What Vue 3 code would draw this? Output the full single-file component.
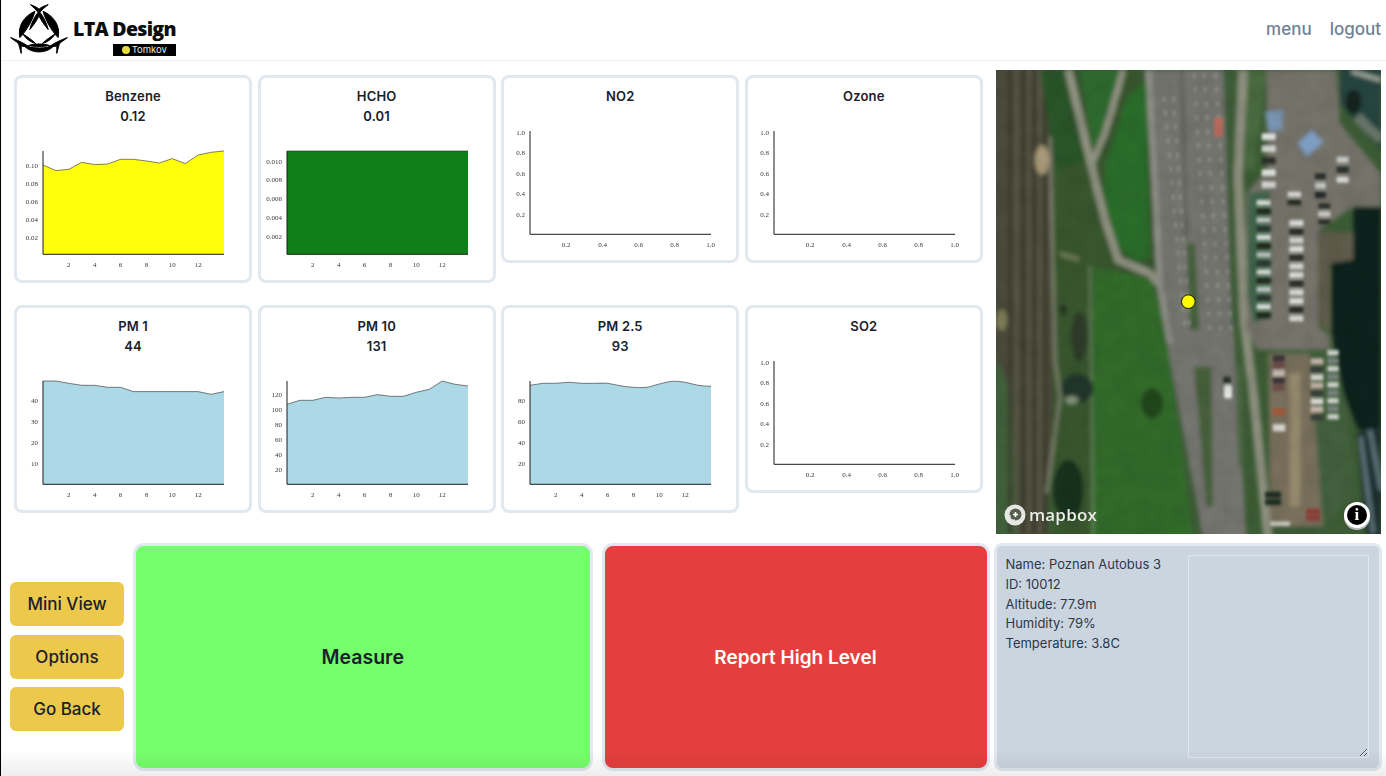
<template>
  <div class="page">
    <header class="topbar">
      <div class="brand">
        <svg class="brand-mark" viewBox="28 0 176 156">
          <path d="M90 4C100 8 110 12 116 18C122 12 132 8 144 4C134 12 126 18 120 26H112C106 18 98 12 90 4Z" />
          <path d="M104 24C72 38 50 68 58 104C66 96 72 88 80 76C90 60 98 44 104 24Z" />
          <path d="M128 24C160 38 182 68 174 104C166 96 160 88 152 76C142 60 134 44 128 24Z" />
          <path d="M116 24C104 38 92 60 88 80C98 68 110 52 116 38C122 52 134 68 144 80C140 60 128 38 116 24Z" />
          <path d="M70 128C92 154 140 154 162 128C140 138 94 138 70 128Z" />
          <path d="M84 128C100 122 132 122 148 128C132 132 100 132 84 128Z" />
          <path d="M30 104C50 112 66 118 92 136C78 132 68 130 62 130L62 152C58 138 56 126 52 120C44 114 36 110 30 104Z" />
          <path d="M202 104C182 112 166 118 140 136C154 132 164 130 170 130L170 152C174 138 176 126 180 120C188 114 196 110 202 104Z" />
          <path d="M66 92C76 108 90 118 106 122C94 110 80 102 66 92Z" />
          <path d="M166 92C156 108 142 118 126 122C138 110 152 102 166 92Z" />
        </svg>
        <div class="brand-text">
          <div class="brand-name">LTA Design</div>
          <div class="brand-tag"><span class="brand-dot"></span>Tomkov</div>
        </div>
      </div>
      <nav class="topnav">
        <a>menu</a>
        <a>logout</a>
      </nav>
    </header>

    <section class="upper">
      <div class="sensor-grid">
        <div v-for="c in charts" :key="c.name" class="sensor-card">
          <div class="sensor-name">{{ c.name }}</div>
          <div v-if="c.value" class="sensor-name">{{ c.value }}</div>
          <svg class="sensor-chart" width="232" height="154" viewBox="0 0 232 154">
            <path v-if="c.heights" :d="areaPath(c)" :fill="c.fill" />
            <path v-if="c.heights" :d="linePath(c)" fill="none" class="chart-line" />
            <path :d="`M${LEFT} ${TOP}V${BOTTOM}H${RIGHT}`" fill="none" class="chart-axis" />
            <text
              v-for="t in c.yTicks"
              :key="t[0]"
              :x="21"
              :y="BOTTOM - t[1] + 2.4"
              text-anchor="end"
              class="chart-tick"
            >{{ t[0] }}</text>
            <text
              v-for="t in c.xTicks || timeTicks"
              :key="t[0]"
              :x="LEFT + t[1]"
              :y="BOTTOM + 12.5"
              text-anchor="middle"
              class="chart-tick"
            >{{ t[0] }}</text>
          </svg>
        </div>
      </div>

      <div class="map">
        <svg class="map-photo" viewBox="18 30 1155 1392" preserveAspectRatio="none">
          <defs>
            <filter id="soft" x="-5%" y="-5%" width="110%" height="110%"><feGaussianBlur stdDeviation="7" /></filter>
            <filter id="softer" x="-5%" y="-5%" width="110%" height="110%"><feGaussianBlur stdDeviation="4" /></filter>
            <filter id="grain" x="0" y="0" width="100%" height="100%">
              <feTurbulence type="fractalNoise" baseFrequency="0.018" numOctaves="2" seed="4" />
              <feColorMatrix values="0 0 0 0 0  0 0 0 0 0  0 0 0 0 0  1.6 0 0 0 -0.55" />
            </filter>
          </defs>
          <rect x="18" y="30" width="1155" height="1392" fill="#3c5c35" />
          <g filter="url(#soft)">
            <path d="M0 0H188L196 900L170 1440H0Z" fill="#4c4b3a" />
            <path d="M0 880Q60 930 72 1120L80 1440H0Z" fill="#40603a" />
            <path d="M60 20V1420M100 20V1420M132 20V1420M165 20V1420" stroke="#38382b" stroke-width="9" />
            <path d="M80 20V1420M118 20V1420M150 20V1420" stroke="#605f4c" stroke-width="6" />
            <path d="M190 30H480L500 660L600 1440H190Z" fill="#37572f" />
            <path d="M310 620L490 660L530 830L610 1440H300Z" fill="#316a2c" />
            <path d="M150 30H235L290 300L200 330L180 230Z" fill="#2c5429" />
            <path d="M270 30H390L315 290Z" fill="#2d6b2f" />
            <path d="M412 110L470 60L480 590L430 606L380 550L340 400L350 300Z" fill="#2c6c2c" />
            <path d="M235 30L300 300L345 480L385 600L480 640L525 690" fill="none" stroke="#8f9180" stroke-width="24" />
            <path d="M400 30L345 220L305 310" fill="none" stroke="#8f9180" stroke-width="20" />
            <path d="M180 230L195 900L210 1010L170 1300" fill="none" stroke="#7c7f6c" stroke-width="10" />
            <path d="M300 620L310 1440" fill="none" stroke="#66805a" stroke-width="7" />
            <path d="M470 30H705L730 800L770 1440H640L540 900L500 660Z" fill="#747570" />
            <path d="M475 30L510 680L540 850" fill="none" stroke="#8f9088" stroke-width="18" />
            <path d="M700 30H745L742 600L750 800H725Z" fill="#3e5d38" />
            <path d="M772 30H832L790 330L770 330Z" fill="#486a3f" />
            <path d="M760 30L745 350L765 800L790 1000L835 1440" fill="none" stroke="#8d8f7e" stroke-width="28" />
            <path d="M590 550H615L628 810H600Z" fill="#45603a" />
            <path d="M612 920H665L668 1340H650Z" fill="#46603a" />
            <path d="M735 920H755L760 1220H745Z" fill="#4e6844" />
            <path d="M575 30L590 540" stroke="#5e5e5a" stroke-width="10" fill="none" />
            <path d="M830 30H1040L1050 190L1173 340V440H1090L985 510V800L1020 830V870H800L770 800V400L830 330Z" fill="#74736a" />
            <path d="M776 400L840 390L842 770L790 790L772 700Z" fill="#40654a" />
            <path d="M985 510L1090 520V600L1020 610V820L985 790Z" fill="#5e5c4c" />
            <path d="M835 880H960L1000 1400H840Z" fill="#786f5c" />
            <path d="M960 880H1060L1092 1300L1000 1410Z" fill="#42613e" />
            <path d="M915 940V1340" stroke="#95896e" stroke-width="32" />
            <path d="M1090 440H1173V1110H1105L1060 1000L1025 820V610L1090 600Z" fill="#10231f" />
            <path d="M1100 1120L1173 1100V1440H1130Z" fill="#1f2f2e" />
            <path d="M1112 1130L1150 1420M1140 1110L1173 1290" stroke="#5f747c" stroke-width="14" />
            <path d="M1050 20H1173V270L1100 190L1050 130Z" fill="#27443f" />
            <path d="M1100 170L1173 240" stroke="#67766b" stroke-width="30" />
            <path d="M1085 35L1173 60" stroke="#a4aca2" stroke-width="12" />
            <ellipse cx="1090" cy="125" rx="24" ry="36" fill="#14201b" />
            <path d="M825 155L880 150L875 210L835 215Z" fill="#7b96b5" />
            <path d="M925 250L965 210L1000 245L950 290Z" fill="#7d9dc2" />
            <ellipse cx="268" cy="830" rx="24" ry="76" fill="#2e3a2c" />
            <ellipse cx="220" cy="750" rx="10" ry="18" fill="#26331f" />
            <ellipse cx="262" cy="985" rx="48" ry="44" fill="#24362a" />
            <ellipse cx="245" cy="1020" rx="20" ry="12" fill="#80907a" />
            <ellipse cx="486" cy="1030" rx="32" ry="46" fill="#23461f" />
            <ellipse cx="235" cy="1290" rx="46" ry="90" fill="#19301c" />
            <ellipse cx="156" cy="300" rx="22" ry="44" fill="#a89a78" />
            <ellipse cx="35" cy="780" rx="17" ry="32" fill="#7d7c58" />
            <path d="M210 582L268 598" stroke="#6f7a55" stroke-width="14" />
          </g>
          <g filter="url(#softer)">
            <rect v-for="(d, i) in laneDashes" :key="'d' + i" :x="d[0]" :y="d[1]" width="5" height="14" fill="#cfd2cc" opacity="0.5" />
            <rect v-for="(car, i) in cars" :key="'c' + i" :x="car[0]" :y="car[1]" :width="car[2]" :height="car[3]" :fill="car[4]" />
            <rect x="672" y="172" width="28" height="58" rx="8" fill="#b8695c" />
            <rect x="702" y="975" width="24" height="40" rx="6" fill="#e3e6e4" />
            <rect x="700" y="950" width="22" height="20" fill="#26302a" />
          </g>
          <rect x="18" y="30" width="1155" height="1392" filter="url(#grain)" opacity="0.08" />
          <circle cx="595" cy="725" r="20.5" fill="#ffff00" stroke="#111" stroke-width="3" />
        </svg>
        <div class="map-logo">
          <svg width="22" height="22" viewBox="0 0 22 22">
            <circle cx="11" cy="11" r="10.5" fill="#e6e6e4" />
            <circle cx="11.5" cy="10.5" r="6" fill="#56604c" />
            <path d="M5.5 11V16.5H11" fill="none" stroke="#e6e6e4" stroke-width="2" />
            <path d="M11.5 8v5M9 10.5h5" stroke="#fff" stroke-width="1.6" />
          </svg>
          <span>mapbox</span>
        </div>
        <div class="map-info">i</div>
      </div>
    </section>

    <section class="lower">
      <div class="side-actions">
        <button class="side-btn">Mini View</button>
        <button class="side-btn">Options</button>
        <button class="side-btn">Go Back</button>
      </div>
      <button class="big-btn big-btn-measure">Measure</button>
      <button class="big-btn big-btn-report">Report High Level</button>
      <div class="device-panel">
        <div class="device-info">
          <div v-for="line in deviceInfo" :key="line">{{ line }}</div>
        </div>
        <textarea class="device-notes"></textarea>
      </div>
    </section>

    <div class="bottom-fade"></div>
  </div>
</template>

<script setup>
const LEFT = 26
const RIGHT = 207
const TOP = 25
const BOTTOM = 128.3

// x axis 0..14 on the filled charts, 12.93px per step
const STEP = (RIGHT - LEFT) / 14
const timeTicks = [2, 4, 6, 8, 10, 12].map((n) => [n, n * STEP])
const unitTicks = [['0.2', 36], ['0.4', 72.5], ['0.6', 108.5], ['0.8', 144.5], ['1.0', 180.5]]
const unitY = [['1.0', 102], ['0.8', 81.5], ['0.6', 61], ['0.4', 40.5], ['0.2', 20]]

const BLUE = '#add8e6'

// heights are pixels above the x axis
const charts = [
  {
    name: 'Benzene', value: '0.12', fill: '#ffff0c',
    heights: [89.3, 83.7, 85, 92, 89.7, 90.3, 95, 95, 93.3, 91.3, 95.7, 90.7, 99.3, 102, 103.3],
    yTicks: [['0.10', 88.3], ['0.08', 70.3], ['0.06', 52.3], ['0.04', 34.7], ['0.02', 16.7]]
  },
  {
    name: 'HCHO', value: '0.01', fill: '#107f17',
    heights: Array(15).fill(103.3),
    yTicks: [['0.010', 92.7], ['0.008', 74.3], ['0.006', 55.3], ['0.004', 36.7], ['0.002', 18]]
  },
  { name: 'NO2', xTicks: unitTicks, yTicks: unitY },
  { name: 'Ozone', xTicks: unitTicks, yTicks: unitY },
  {
    name: 'PM 1', value: '44', fill: BLUE,
    heights: [103.3, 103.3, 101, 99, 99, 97, 97, 92.7, 92.7, 92.7, 92.7, 92.7, 92.7, 90, 92.7],
    yTicks: [['40', 83.7], ['30', 62.7], ['20', 41.7], ['10', 20.7]]
  },
  {
    name: 'PM 10', value: '131', fill: BLUE,
    heights: [80, 84, 84, 87, 86.3, 87, 87, 89.7, 88, 88, 92, 95, 103.3, 100, 98.3],
    yTicks: [['120', 89.7], ['100', 75], ['80', 60], ['60', 44.3], ['40', 30], ['20', 15]]
  },
  {
    name: 'PM 2.5', value: '93', fill: BLUE, smooth: true,
    heights: [99, 101, 101, 102, 101, 101, 101, 98.5, 97, 97, 100.3, 103, 102, 99, 98],
    yTicks: [['80', 83.7], ['60', 62.7], ['40', 41.7], ['20', 20.7]]
  },
  { name: 'SO2', xTicks: unitTicks, yTicks: unitY }
]

function linePath(c) {
  const pts = c.heights.map((h, i) => [LEFT + i * STEP, BOTTOM - h])
  let d = `M${pts[0][0]} ${pts[0][1]}`
  for (let i = 1; i < pts.length; i++) {
    if (!c.smooth) {
      d += `L${pts[i][0]} ${pts[i][1]}`
      continue
    }
    // catmull-rom through the points
    const p0 = pts[i - 2] || pts[i - 1]
    const p1 = pts[i - 1]
    const p2 = pts[i]
    const p3 = pts[i + 1] || p2
    d += `C${p1[0] + STEP / 3} ${p1[1] + (p2[1] - p0[1]) / 6} ${p2[0] - STEP / 3} ${p2[1] - (p3[1] - p1[1]) / 6} ${p2[0]} ${p2[1]}`
  }
  return d
}

function areaPath(c) {
  return `${linePath(c)}V${BOTTOM}H${LEFT}Z`
}

const deviceInfo = [
  'Name: Poznan Autobus 3',
  'ID: 10012',
  'Altitude: 77.9m',
  'Humidity: 79%',
  'Temperature: 3.8C'
]

// map painting, in 3x crop units
const laneDashes = []
;[[610, 40, 0.06], [640, 40, 0.065], [675, 40, 0.06], [520, 110, 0.09], [548, 110, 0.07]].forEach(([x, y, slope]) => {
  for (let i = 0; y + i * 42 < 800; i++) {
    laneDashes.push([x + i * 42 * slope, y + i * 42])
  }
})

const cars = []
const lot = (x, from, to, gap, w, h, colors) => {
  let n = 0
  for (let y = from; y < to; y += gap) {
    cars.push([x, y, w, h, colors[n % colors.length]])
    n++
  }
}
lot(800, 420, 780, 26, 42, 16, ['#d8dcd8', '#20261f', '#c3c9c6', '#2c3430'])
lot(893, 395, 440, 24, 40, 16, ['#d9dbd6', '#24291f'])
lot(898, 480, 775, 26, 42, 18, ['#e0e2de', '#2b2e28', '#d5d8d3'])
lot(815, 220, 375, 36, 42, 20, ['#e0e3df', '#d5d8d4', '#2b2f28'])
lot(985, 430, 500, 24, 36, 16, ['#2d332c', '#cfd2cc'])
lot(975, 340, 400, 28, 32, 18, ['#272d29', '#c4c9c4', '#20262a'])
lot(1040, 290, 380, 30, 36, 18, ['#c4c9c4', '#272d29', '#dadcd8'])
lot(848, 885, 975, 22, 36, 20, ['#3b3038', '#6a4b4a', '#c9c0b6'])
lot(848, 1045, 1060, 20, 38, 20, ['#a55638'])
lot(848, 1092, 1110, 20, 38, 22, ['#d8d6d0'])
lot(962, 895, 1070, 24, 38, 18, ['#c9b7ac', '#3a4137', '#dad9d2'])
lot(1012, 870, 1070, 24, 34, 16, ['#cfd3ce', '#7c8480'])
lot(948, 1345, 1370, 20, 42, 18, ['#8a3f3b'])
lot(840, 1385, 1400, 20, 60, 12, ['#d6d7cf'])
lot(825, 1295, 1330, 22, 48, 18, ['#1e2e23'])
</script>

<style scoped>
.page {
  position: relative;
  box-sizing: border-box;
  width: 1386px;
  height: 776px;
  overflow: hidden;
  border-left: 1px solid #000;
  background: #fff;
  font-family: Inter, "Liberation Sans", sans-serif;
  color: #1a202c;
}

.topbar {
  display: flex;
  align-items: center;
  justify-content: space-between;
  box-sizing: border-box;
  height: 61px;
  padding: 0 5px 2px 9px;
  border-bottom: 1px solid #edf2f7;
}

.brand {
  display: flex;
  align-items: flex-start;
  gap: 5px;
}

.brand-mark {
  width: 58px;
  height: 52px;
  margin-top: 1px;
  fill: #000;
  stroke: #000;
  stroke-width: 3;
  stroke-linejoin: round;
}

.brand-text {
  display: flex;
  flex-direction: column;
  align-items: flex-end;
  padding-top: 14px;
}

.brand-name {
  font-family: "Open Sans", "Liberation Sans", sans-serif;
  font-size: 19.5px;
  line-height: 26px;
  font-weight: 800;
  letter-spacing: -0.7px;
  color: #0c0c0c;
}

.brand-tag {
  display: flex;
  align-items: center;
  justify-content: center;
  gap: 2px;
  width: 63px;
  height: 12px;
  margin-top: 2px;
  background: #000;
  color: #e8e8e8;
  font-size: 9.5px;
  line-height: 12px;
}

.brand-dot {
  width: 8px;
  height: 8px;
  border-radius: 50%;
  background: #e7dc3c;
}

.topnav {
  display: flex;
  gap: 18px;
  font-size: 17px;
  font-weight: 500;
  color: #718096;
}

.upper {
  display: flex;
  height: 473px;
}

.sensor-grid {
  display: grid;
  grid-template-columns: repeat(4, 238.1px);
  grid-template-rows: 208px 208px;
  column-gap: 5.5px;
  row-gap: 22px;
  align-items: start;
  margin: 13.5px 0 0 13px;
}

.sensor-card {
  box-sizing: border-box;
  border: 3px solid #e2e8f0;
  border-radius: 8px;
  padding-top: 8.5px;
  text-align: center;
}

.sensor-name {
  font-size: 13px;
  line-height: 20px;
  font-weight: 600;
  letter-spacing: 0.15px;
}

.sensor-chart {
  display: block;
}

.chart-line {
  stroke: #2d2d2d;
  stroke-width: 0.6;
}

.chart-axis {
  stroke: #1c1c1c;
  stroke-width: 1;
}

.chart-tick {
  font-family: "Liberation Serif", serif;
  font-size: 7px;
  fill: #222;
  opacity: 0.9;
}

.map {
  position: relative;
  width: 385px;
  height: 464px;
  margin: 9px 0 0 13px;
  overflow: hidden;
}

.map-photo {
  display: block;
  width: 100%;
  height: 100%;
}

.map-logo {
  position: absolute;
  left: 8px;
  bottom: 8px;
  display: flex;
  align-items: center;
  gap: 3px;
  color: #eceee8;
  font-family: "Open Sans", Lato, sans-serif;
  font-size: 17px;
  font-weight: 600;
  letter-spacing: 0.2px;
  line-height: 22px;
  text-shadow: 0 0 1px rgba(0, 0, 0, 0.4);
}

.map-info {
  position: absolute;
  right: 14px;
  bottom: 9px;
  box-sizing: border-box;
  width: 20px;
  height: 20px;
  border-radius: 50%;
  background: #000;
  box-shadow: 0 0 0 3px #fff, 0 2px 0 3px #b9b9b9;
  color: #fff;
  font-family: "Liberation Serif", serif;
  font-size: 17px;
  font-weight: 700;
  line-height: 20px;
  text-align: center;
}

.lower {
  display: flex;
  align-items: center;
  gap: 9px;
  height: 227.5px;
  margin-top: 9px;
  padding-left: 9px;
}

.side-actions {
  display: flex;
  flex-direction: column;
  gap: 8.5px;
  width: 114px;
}

.side-btn {
  height: 44px;
  border: none;
  border-radius: 6px;
  background: #ecc94b;
  color: #1a202c;
  font-family: inherit;
  font-size: 17px;
  font-weight: 500;
}

.big-btn {
  box-sizing: border-box;
  height: 227.5px;
  padding-top: 2px;
  border: 3px solid #e2e8f0;
  border-radius: 11px;
  font-family: inherit;
  font-size: 19px;
  font-weight: 600;
}

.big-btn-measure {
  width: 459.5px;
  background: #76ff6c;
  color: #1a202c;
  font-size: 19.5px;
}

.big-btn-report {
  width: 388px;
  background: #e53e3e;
  color: #fff;
  margin-right: -5px;
}

.device-panel {
  display: flex;
  justify-content: space-between;
  box-sizing: border-box;
  width: 388px;
  height: 227.5px;
  padding: 9px 10px 9px 9px;
  border: 3px solid #e2e8f0;
  border-radius: 8px;
  background: #cbd5e0;
}

.device-info {
  font-size: 13px;
  line-height: 19.75px;
  color: #2d3748;
}

.device-notes {
  box-sizing: border-box;
  width: 181px;
  height: 203px;
  margin: 0;
  padding: 0;
  border: 1px solid #e2e8f0;
  border-radius: 1px;
  background: transparent;
  outline: none;
}

.bottom-fade {
  position: absolute;
  left: 0;
  right: 0;
  bottom: 0;
  height: 26px;
  background: linear-gradient(rgba(0, 0, 0, 0), rgba(0, 0, 0, 0.07));
  pointer-events: none;
}
</style>

<style>
html,
body {
  margin: 0;
  background: #fff;
}
</style>
